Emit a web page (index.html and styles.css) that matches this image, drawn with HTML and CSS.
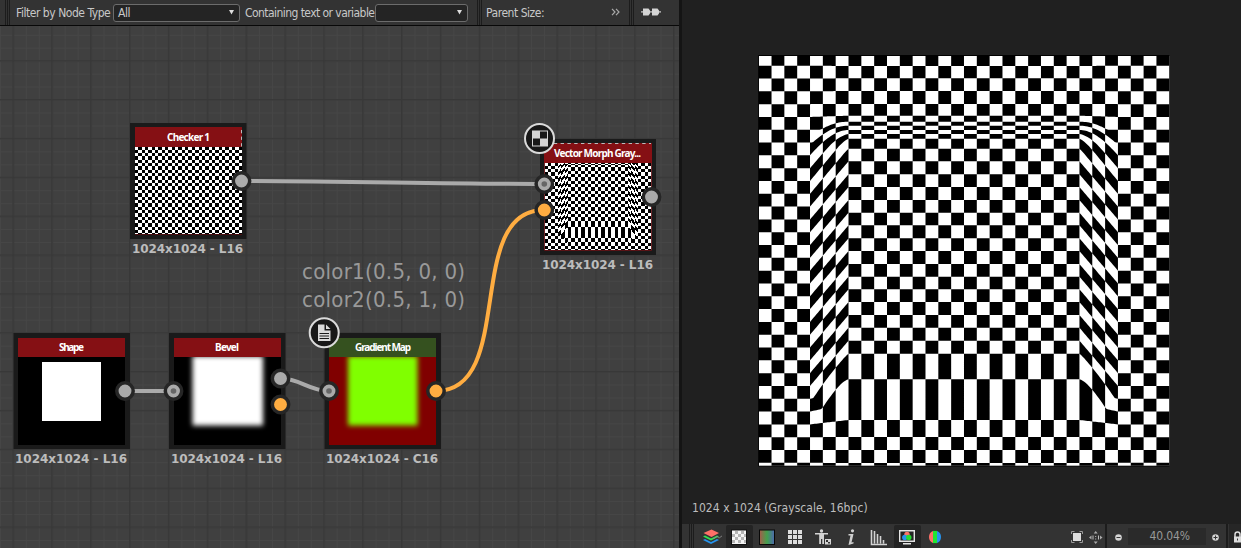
FILE: index.html
```
<!DOCTYPE html>
<html lang="en">
<head>
<meta charset="utf-8">
<title>Node graph</title>
<link rel="stylesheet" href="styles.css">
</head>
<body>
<main class="app">
  <section class="graph-panel">
    <header class="filter-bar">
      <span class="handle handle-first"></span>
      <span class="label label-type">Filter by Node Type</span>
      <span class="combo combo-type"><span>All</span><svg width="5" height="5"><path d="M0 0h5L2.500 4.500z" fill="#ddd"/></svg></span>
      <span class="label label-text">Containing text or variable</span>
      <span class="combo combo-text"><span></span><svg width="5" height="5"><path d="M0 0h5L2.500 4.500z" fill="#ddd"/></svg></span>
      <span class="handle handle-mid"></span>
      <span class="label label-parent">Parent Size:</span>
      <svg class="more" width="9" height="8" fill="none" stroke="#aaa" stroke-width="1.200"><path d="M1 .8 4 4 1 7.200M5 .8 8 4 5 7.200"/></svg>
      <span class="handle handle-end"></span>
      <svg class="link" width="20" height="8" fill="#d4d4d4"><path d="M0 3.300h20v1.200H0z"/><path d="M2 .5h5.500L9 2.500v3L7.500 7.500H2zM11 .5h5.500L18 2.500v3l-1.500 2H11z"/></svg>
    </header>
    <svg class="graph" width="679" height="522" viewBox="0 26 679 522">
      <defs>
        <pattern id="minor" x="12.900" y="21.800" width="12.953" height="12.953" patternUnits="userSpaceOnUse"><path d="M.5 0v13M0 .5h13" stroke="#464646" stroke-width="1"/></pattern>
        <pattern id="major" x="12.400" y="21.300" width="38.860" height="38.860" patternUnits="userSpaceOnUse"><path d="M.8 0v39M0 .8h39" stroke="#383838" stroke-width="1.600"/></pattern>
        <filter id="soft" x="-20%" y="-20%" width="140%" height="140%" color-interpolation-filters="sRGB"><feGaussianBlur stdDeviation="2.700"/></filter>
      </defs>
      <rect y="26" width="679" height="522" fill="#404040"/>
      <rect y="26" width="679" height="522" fill="url(#minor)"/>
      <rect y="26" width="679" height="522" fill="url(#major)"/>

      <g class="node">
        <rect class="frame" x="130" y="123" width="116.500" height="116"/>
        <rect x="135" y="127" width="107" height="107" fill="#fff"/>
        <svg x="135" y="127" width="107" height="107" viewBox="758.700 55.200 410.600 410.600" preserveAspectRatio="none"><path class="plain-checker crisp"/></svg>
        <rect class="head" x="135" y="127" width="107" height="20"/>
        <path d="M241.500 130v17" stroke="#bbb" stroke-dasharray="3.300"/>
        <path d="M135 234.500h107" stroke="#4a0d10"/>
        <text class="title" x="167" y="141" textLength="43">Checker 1</text>
        <text class="size" x="132" y="253" textLength="111">1024x1024 - L16</text>
      </g>

      <g class="node">
        <rect class="frame" x="540" y="139" width="116" height="116"/>
        <rect x="544.500" y="143" width="107" height="107" fill="#fff"/>
        <svg x="544.500" y="143" width="107" height="107" viewBox="758.700 55.200 410.600 410.600" preserveAspectRatio="none"><path class="morph-checker crisp"/></svg>
        <rect class="head" x="544" y="143" width="108" height="20"/>
        <path d="M547 143.500h104" stroke="#bbb" stroke-dasharray="3.400"/>
        <path d="M544.500 163v87.500h107V163" fill="none" stroke="#6b1014" stroke-width=".8"/>
        <text class="title" x="554" y="157" textLength="87">Vector Morph Gray...</text>
        <text class="size" x="542" y="269" textLength="111">1024x1024 - L16</text>
      </g>

      <g class="node">
        <rect class="frame" x="13.500" y="333" width="116.500" height="116"/>
        <rect x="18" y="338" width="107" height="107"/>
        <rect x="42" y="362" width="59" height="59" fill="#fff"/>
        <rect class="head" x="18" y="338" width="107" height="19"/>
        <text class="title" x="59" y="351" textLength="25">Shape</text>
        <text class="size" x="15" y="463" textLength="112">1024x1024 - L16</text>
      </g>

      <g class="node">
        <rect class="frame" x="169" y="333" width="116.500" height="116"/>
        <rect x="174" y="338" width="107" height="107"/>
        <rect x="192.500" y="356" width="70.500" height="69.500" fill="#fff" filter="url(#soft)"/>
        <rect class="head" x="174" y="338" width="107" height="19"/>
        <text class="title" x="215" y="351" textLength="24">Bevel</text>
        <text class="size" x="171" y="463" textLength="111">1024x1024 - L16</text>
      </g>

      <g class="node">
        <rect class="frame" x="324.500" y="333" width="116.500" height="116"/>
        <rect x="329" y="338" width="107" height="107" fill="#800000"/>
        <rect x="348" y="356" width="69.500" height="69.500" fill="#80ff00" filter="url(#soft)"/>
        <rect class="head head-green" x="329" y="338" width="107" height="19"/>
        <text class="title" x="355" y="351" textLength="56">Gradient Map</text>
        <text class="size" x="326" y="463" textLength="112">1024x1024 - C16</text>
      </g>

      <text class="note" x="302" y="279" textLength="163">color1(0.5, 0, 0)</text>
      <text class="note" x="302" y="307" textLength="163">color2(0.5, 1, 0)</text>

      <g fill="none" stroke="#aaa" stroke-width="4">
        <path d="M242 181C343 181 443 184 544 184M125 391h48M281 378.500C300 378.500 309 391 329 391"/>
        <path stroke="#ffad41" d="M436 391C517 391 463 210 544 210"/>
      </g>
      <g fill="#aaa" stroke="#262626" stroke-width="3.500">
        <circle cx="241.500" cy="181" r="8.200"/><circle cx="544.300" cy="184" r="8.200"/><circle cx="651.500" cy="197" r="8.200"/>
        <circle cx="125" cy="391" r="8.200"/><circle cx="173.500" cy="391" r="8.200"/><circle cx="280.500" cy="378.500" r="8.200"/><circle cx="329" cy="391" r="8.200"/>
        <g fill="#ffad41"><circle cx="544.300" cy="210" r="8.200"/><circle cx="280.500" cy="404.500" r="8.200"/><circle cx="436" cy="391" r="8.200"/></g>
      </g>
      <g fill="#666"><circle cx="544.300" cy="184" r="2.800"/><circle cx="173.500" cy="391" r="2.800"/><circle cx="329" cy="391" r="2.800"/></g>

      <g fill="#181818" stroke="#dadada" stroke-width="2"><circle cx="539.500" cy="138.500" r="14.500"/><circle cx="324.200" cy="332.800" r="14.500"/></g>
      <rect x="532" y="130.500" width="16" height="16" fill="#d4d4d4"/>
      <path d="M540 131.500h7v7h-7zM533 138.500h7v7h-7z" fill="#181818"/>
      <path d="M318 324.500h6.500v6h6V341H318z" fill="#dadada"/><path d="M326 324.500l4.500 4.500H326z" fill="#dadada"/>
      <path d="M319.500 333.500h9.500M319.500 336h9.500M319.500 338.500h9.500" stroke="#181818"/>
    </svg>
  </section>

  <section class="view-panel">
    <div class="viewport">
      <svg class="preview" width="412" height="412" viewBox="758 55 412 412"><rect x="758.300" y="55" width="411" height="411.500"/><rect x="759" y="56" width="410.200" height="409.700" fill="#fff"/><path class="morph-checker"/></svg>
      <p class="info">1024 x 1024 (Grayscale, 16bpc)</p>
    </div>
    <footer class="view-bar">
      <span class="handle"></span>
      <svg class="icons" width="264" height="24" viewBox="694 524 264 24">
        <path d="M703 540l8 4 8-4-2-1-6 3-6-3z" fill="#2694ee"/><path d="M703 536.500l8 4 8-4-2-1-6 3-6-3z" fill="#31e252"/><path d="M703.500 533l8-3.500 7.500 3.500-7.500 4z" fill="#ff7068"/><path d="M713 538c2 2 3-3 5-1 1 2 2 0 4-1" fill="none" stroke="#8c8c8c"/>
        <rect x="726" y="525" width="27" height="24" fill="#242424" rx="2"/>
        <rect x="731" y="529.500" width="16" height="15.500" fill="#111"/><rect x="732" y="530.500" width="14" height="13.500" fill="#f4f4f4"/>
        <path d="M735 531h3v3h-3zM741 531h3v3h-3zM732 534h3v3h-3zM738 534h3v3h-3zM744 534h2v3h-2zM735 537h3v3h-3zM741 537h3v3h-3zM732 540h3v3h-3zM738 540h3v3h-3zM744 540h2v3h-2z" fill="#b5b5b5"/>
        <defs><linearGradient id="spectrum"><stop stop-color="#a85b4b"/><stop offset=".5" stop-color="#43a04c"/><stop offset="1" stop-color="#4c68b0"/></linearGradient></defs>
        <rect x="759.500" y="530" width="15" height="14.500" fill="url(#spectrum)" stroke="#080808"/>
        <path d="M788 530h4v4h-4zM793 530h4v4h-4zM798 530h4v4h-4zM788 535h4v4h-4zM793 535h4v4h-4zM798 535h4v4h-4zM788 540h4v4h-4zM793 540h4v4h-4zM798 540h4v4h-4z" fill="#ddd"/>
        <g fill="#d4d4d4"><circle cx="821.500" cy="531" r="1.700"/><path d="M815 533h13v1.500h-4V544h-1.700v-5h-1.300v5h-1.800v-9.500H815z"/><path d="M825 539h6v5.500h-6z"/></g><path d="M826 540h2v2h-2zM828 542h2v1.500h-2z" fill="#333"/>
        <g fill="#cfcfcf"><circle cx="852.500" cy="530.800" r="1.600"/><path d="M848.500 534h5l-2 8.500 2-.5v1.500l-5 1.500 2-9.500h-2z"/></g>
        <path d="M871.500 530v14.500h15.500M874.500 531v12.500M877.500 534v9.500M880.500 536v7.500M883.500 540v3.500" fill="none" stroke="#d4d4d4" stroke-width="1.600"/>
        <rect x="894" y="525" width="27" height="24" fill="#242424" rx="2"/>
        <path d="M899.700 530.700h14.600v10.600h-14.600zM903 543.800h8" fill="none" stroke="#e4e4e4" stroke-width="1.400"/><circle cx="907" cy="534.500" r="2.700" fill="#ff7068"/><circle cx="904.800" cy="537.500" r="2.700" fill="#2694ee"/><circle cx="908.800" cy="537.500" r="2.700" fill="#25dc32"/>
        <path d="M933 531a6.500 6.500 0 0 0 0 12z" fill="#ff7068"/><path d="M933 530.900h4v12.200h-4z" fill="#20e632"/><path d="M937 531a6.500 6.500 0 0 1 0 12z" fill="#2694ee"/>
      </svg>
      <svg class="fit" width="34" height="24" viewBox="1070 524 34 24"><path d="M1073 533h8v8h-8z" fill="#ddd"/><path d="M1071.500 534v-2.500h3M1079.500 531.500h3v2.500M1082.500 540v2.500h-3M1074.500 542.500h-3V540" fill="none" stroke="#999"/><path d="M1089 537.500l2.500-2v4zM1102.500 537.500l-2.500-2v4zM1095.700 531l-2 2.500h4zM1095.700 544l-2-2.500h4z" fill="#aaa"/><path d="M1093 535.500v4M1098.500 535.500v4M1095.700 536v1M1095.700 538.500v1" stroke="#bbb"/></svg>
      <span class="sep"></span>
      <svg width="20" height="24" viewBox="1108 524 20 24"><circle cx="1118.500" cy="537.500" r="3.300" fill="#d4d4d4"/><path d="M1116.500 537.500h4" stroke="#333"/></svg>
      <span class="zoom">40.04%</span>
      <svg width="19" height="24" viewBox="1206 524 19 24"><circle cx="1215.500" cy="537.500" r="3.300" fill="#d4d4d4"/><path d="M1213.500 537.500h4M1215.500 535.500v4" stroke="#333"/></svg>
      <span class="sep"></span>
      <svg class="lock" width="13" height="24" viewBox="1228 524 13 24"><path d="M1234 537v-2.500a2.500 2.500 0 0 1 5 0v2.500" fill="none" stroke="#ddd" stroke-width="1.500"/><path d="M1233 536.500h7v6h-7z" fill="#ddd"/><path d="M1236.500 538.500v2" stroke="#333"/></svg>
    </footer>
  </section>
</main>
<script src="checker.js"></script>
</body>
</html>
```
FILE: styles.css
```
* { box-sizing: border-box; }
body { margin: 0; background: #202020; color: #c8c8c8; font: 12px "DejaVu Sans Condensed", "DejaVu Sans", sans-serif; font-stretch: condensed; }
.app { display: flex; width: 1241px; height: 548px; overflow: hidden; }
.graph-panel { width: 682px; border-right: 3px solid #141414; display: flex; flex-direction: column; }
.filter-bar { display: flex; align-items: center; height: 26px; background: #333; border-bottom: 1px solid #080808; }
.label { white-space: nowrap; flex: none; }
.label-type { width: 97px; letter-spacing: -.46px; }
.label-text { width: 130px; letter-spacing: -.56px; }
.label-parent { width: 125px; letter-spacing: -.46px; }
.handle { flex: none; width: 5px; height: 100%; border-left: 1px solid #1c1c1c; border-right: 1px solid #1c1c1c; background: linear-gradient(90deg, #333 1px, #1c1c1c 1px 2px, #333 2px); }
.handle-first { margin: 0 6px 0 5px; }
.handle-mid { margin: 0 4px 0 9px; }
.handle-end { margin: 0 7px 0 9px; }
.combo { flex: none; display: flex; align-items: center; justify-content: space-between; height: 18px; padding: 0 5px 0 4px; background: #242424; border: 1px solid #6c6c6c; border-radius: 3px; }
.combo-type { width: 127px; margin-right: 5px; letter-spacing: -.4px; }
.combo-text { width: 93px; }
.more, .link { flex: none; margin-bottom: 2px; }
.graph { display: block; }
.frame { fill: #1a1a1a; }
.head { fill: #851014; }
.head-green { fill: #35511f; }
.title { fill: #fff; font: bold 10px "Noto Sans", sans-serif; }
.size { fill: #bcbcbc; font: bold 12px "DejaVu Sans", sans-serif; }
.note { fill: #999; font: condensed 22px "DejaVu Sans Condensed", "DejaVu Sans", sans-serif; }
.crisp { shape-rendering: crispEdges; }
.view-panel { flex: 1; display: flex; flex-direction: column; background: #202020; }
.viewport { height: 524px; padding: 55px 0 0 76px; }
.preview { display: block; }
.info { margin: 33px 0 0 -66px; line-height: 16px; letter-spacing: .06px; color: #bdbdbd; }
.view-bar { display: flex; align-items: center; height: 24px; background: #333; padding-left: 7px; }
.view-bar svg, .sep, .zoom { flex: none; }
.fit { margin-left: 112px; }
.sep { width: 2px; height: 24px; margin: 0 1px; background: #1c1c1c; }
.zoom { width: 78px; height: 17px; padding-right: 16px; background: #2a2a2a; color: #999; line-height: 17px; text-align: right; letter-spacing: -.1px; }
.lock { background: #262626; }
```
FILE: checker.js
```
// Row edges of the regular grid and of the displaced centre area.
const left = 758.7, cell = 12.83;
const outer = [56];
for (let k = 0; k < 32; k++) outer.push(65.7 + k * 12.81);
outer.push(465.7);
const center = [56, 66, 78.3, 91, 104, 115.7, 121.7, 125.7, 130, 134, 138.7, 148.7, 161.3, 174.3, 187, 200, 212.7,
  225.3, 238.3, 251, 264, 276.7, 289.3, 302, 315, 327.7, 340.7, 353.7, 379.3, 420, 437, 450, 463, 465.7];

// Follows the beveled vector field backwards from an undisplaced edge.
const bevel = (d, y) => {
  const dy = Math.max(156 - y, y - 384, 0);
  return Math.max(0, 1 - Math.hypot(d, dy) / 38.5);
};
const flow = (d, y) => {
  for (let i = 0; i < 60; i++) y -= 45 * bevel(d, y) / 60;
  return y;
};
const fix = outer.map((y, k) => center[k] - flow(0, y));
const innerL = left + 7 * cell, innerR = left + 25 * cell;
const edge = (x, k) => {
  const d = Math.max(innerL - x, x - innerR, 0);
  if (d >= 38.4) return outer[k];
  return flow(d, outer[k]) + fix[k] * (1 - d / 38.5);
};

function checkerPath(edgeAt) {
  let path = '';
  for (let c = 0; c < 32; c++) {
    const x0 = left + c * cell, x1 = x0 + cell;
    for (let k = 0; k < 33; k++) {
      if ((c + k) % 2 === 0) continue;
      const top = [], bottom = [];
      for (let i = 0; i <= 8; i++) {
        const x = x0 + (x1 - x0) * i / 8;
        const sample = Math.min(x1 - .01, Math.max(x0 + .01, x));
        top.push(x.toFixed(2) + ' ' + edgeAt(sample, k).toFixed(2));
        bottom.unshift(x.toFixed(2) + ' ' + edgeAt(sample, k + 1).toFixed(2));
      }
      path += 'M' + top.concat(bottom).join('L') + 'Z';
    }
  }
  return path;
}
document.querySelectorAll('.morph-checker').forEach(p => p.setAttribute('d', checkerPath(edge)));
document.querySelectorAll('.plain-checker').forEach(p => p.setAttribute('d', checkerPath((x, k) => outer[k])));
```
